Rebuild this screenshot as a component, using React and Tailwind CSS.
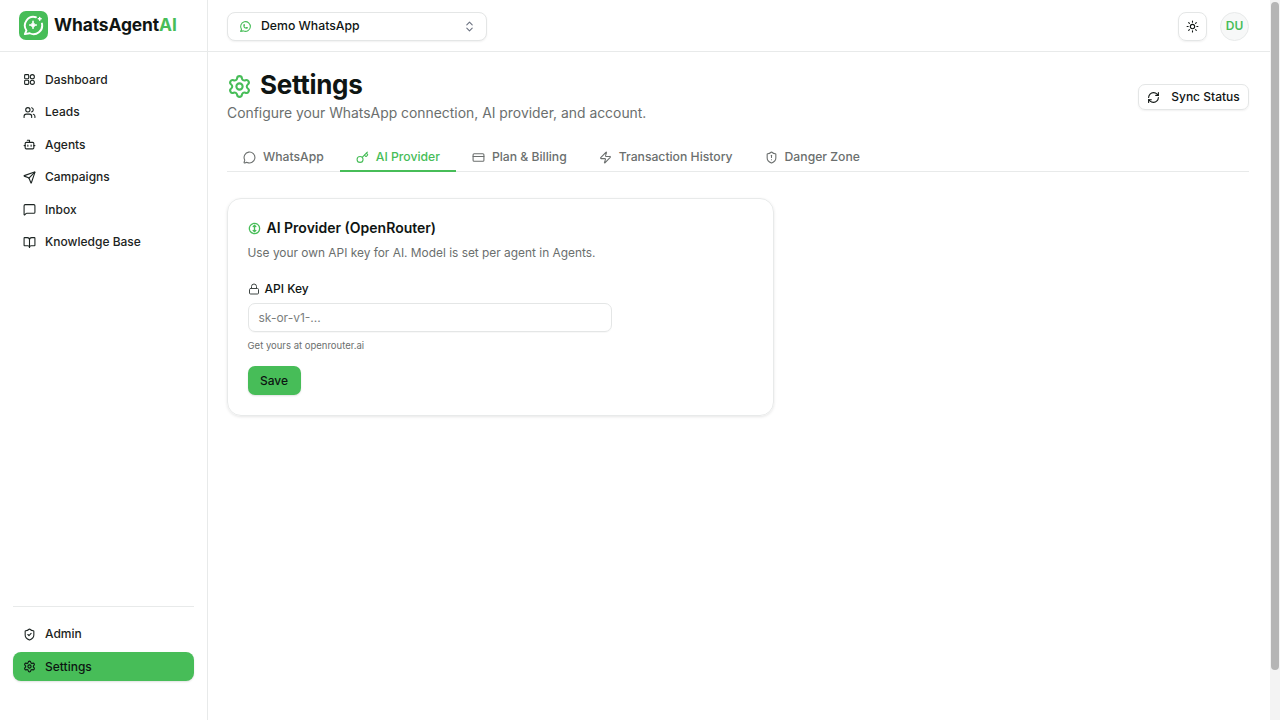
import React from 'react';
import { Users, Bot, Send, MessageSquare, BookOpen, ShieldCheck, Settings, ChevronsUpDown, Sun, RefreshCw, MessageCircle, Key, CreditCard, Zap, ShieldAlert, Lock } from 'lucide-react';

const DashIcon = ({ className }) => (
  <svg viewBox="0 0 24 24" fill="none" stroke="currentColor" strokeWidth="2" className={className}>
    <rect x="3" y="3" width="7.5" height="7.5" rx="1.5" />
    <circle cx="17.2" cy="6.8" r="3.8" />
    <rect x="3" y="13.5" width="7.5" height="7.5" rx="1.5" />
    <circle cx="17.2" cy="17.2" r="3.8" />
  </svg>
);

const WhatsIcon = ({ className }) => (
  <svg viewBox="0 0 24 24" fill="none" stroke="currentColor" strokeWidth="2" strokeLinecap="round" strokeLinejoin="round" className={className}>
    <path d="M3 21l1.65-3.8a9 9 0 1 1 3.4 2.9L3 21" />
    <path d="M9 10a.5.5 0 0 0 1 0V9a.5.5 0 0 0-1 0v1a5 5 0 0 0 5 5h1a.5.5 0 0 0 0-1h-1a.5.5 0 0 0 0 1" />
  </svg>
);

const nav = [
  { label: 'Dashboard', icon: DashIcon },
  { label: 'Leads', icon: Users },
  { label: 'Agents', icon: Bot },
  { label: 'Campaigns', icon: Send },
  { label: 'Inbox', icon: MessageSquare },
  { label: 'Knowledge Base', icon: BookOpen },
];

const tabs = [
  { label: 'WhatsApp', icon: MessageCircle },
  { label: 'AI Provider', icon: Key, active: true },
  { label: 'Plan & Billing', icon: CreditCard },
  { label: 'Transaction History', icon: Zap },
  { label: 'Danger Zone', icon: ShieldAlert },
];

const NavItem = ({ label, icon: Icon, active }) => (
  <div className={`flex h-[29px] items-center gap-[9px] rounded-[8px] px-[10px] text-[12px] font-medium ${active ? 'bg-[#47bd58] text-[#0d1512] shadow-[0_1px_2px_rgba(0,0,0,0.12)]' : 'text-[#1c2422]'}`}>
    <Icon className="h-[13px] w-[13px] shrink-0" />
    <span>{label}</span>
  </div>
);

export default function App() {
  return (
    <div className="flex h-[720px] overflow-hidden bg-white font-['Inter',sans-serif] text-[#0f1513]">
      <aside className="flex w-[208px] shrink-0 flex-col border-r border-[#e8eaea]">
        <div className="flex h-[52px] shrink-0 items-center gap-[6px] border-b border-[#e8eaea] px-[19px]">
          <div className="flex h-[29px] w-[29px] items-center justify-center rounded-[7px] bg-[#47bd58]">
            <svg viewBox="0 0 24 24" fill="none" className="h-[23px] w-[23px] text-white" stroke="currentColor" strokeWidth="2" strokeLinecap="round" strokeLinejoin="round">
              <path d="M14.5 3.4A9 9 0 0 0 4.65 17.2L3 21l5.050-.9A9 9 0 0 0 20.800 10" />
              <path d="M11.500 7.500c.4 2.500 1.500 3.600 4 4-2.500.4-3.600 1.500-4 4-.4-2.500-1.500-3.600-4-4 2.500-.4 3.600-1.500 4-4z" fill="currentColor" strokeWidth="1" />
              <path d="M18.500 3.500v3M17 5h3" strokeWidth="1.500" />
            </svg>
          </div>
          <span className="text-[17.4px] font-bold tracking-[-0.1px]">WhatsAgent<span className="text-[#47bd58]">AI</span></span>
        </div>
        <nav className="flex flex-col gap-[3.5px] px-[13px] pt-[13px]">
          {nav.map((n) => <NavItem key={n.label} {...n} />)}
        </nav>
        <div className="mx-[13px] mb-[39px] mt-auto flex flex-col gap-[3.5px] border-t border-[#e8eaea] pt-[13px]">
          <NavItem label="Admin" icon={ShieldCheck} />
          <NavItem label="Settings" icon={Settings} active />
        </div>
      </aside>

      <div className="flex min-w-0 flex-1 flex-col">
        <header className="flex h-[52px] shrink-0 items-center justify-between border-b border-[#e8eaea] pl-[19px] pr-[21px] pt-[1px]">
          <div className="flex h-[29px] w-[260px] items-center justify-between rounded-[8px] border border-[#e4e6e6] bg-white pl-[11px] pr-[10px] shadow-[0_1px_2px_rgba(0,0,0,0.06)]">
            <div className="flex items-center gap-[9px]">
              <WhatsIcon className="h-[13px] w-[13px] text-[#47bd58]" />
              <span className="text-[12.25px] font-medium">Demo WhatsApp</span>
            </div>
            <ChevronsUpDown className="h-[13px] w-[13px] text-[#6b7280]" />
          </div>
          <div className="flex items-center gap-[13px]">
            <div className="flex h-[29px] w-[29px] items-center justify-center rounded-[8px] border border-[#e4e6e6] shadow-[0_1px_2px_rgba(0,0,0,0.06)]">
              <Sun className="h-[13px] w-[13px]" />
            </div>
            <div className="flex h-[29px] w-[29px] items-center justify-center rounded-full border border-[#e8eaea] bg-[#f7f8f8] text-[12px] font-semibold text-[#47bd58]">DU</div>
          </div>
        </header>

        <main className="flex flex-1 flex-col pl-[19px] pr-[21px] pt-[18px]">
          <div className="flex items-center justify-between">
            <div>
              <div className="flex items-center gap-[8px]">
                <Settings className="h-[25px] w-[25px] text-[#47bd58]" />
                <h1 className="pb-[2px] text-[26px] font-bold leading-[30px] tracking-[-0.3px]">Settings</h1>
              </div>
              <p className="text-[13.9px] leading-[22px] text-[#6b6f6e]">Configure your WhatsApp connection, AI provider, and account.</p>
            </div>
            <button className="flex h-[26px] w-[111px] items-center justify-center gap-[11px] rounded-[7px] border border-[#e4e6e6] text-[12px] font-medium shadow-[0_1px_2px_rgba(0,0,0,0.06)]">
              <RefreshCw className="h-[13px] w-[13px]" />
              Sync Status
            </button>
          </div>

          <div className="mt-[18px] flex h-[30px] items-stretch border-b border-[#e8eaea]">
            {tabs.map((t) => (
              <div key={t.label} className={`-mb-px flex items-center gap-[7px] border-b-2 px-[16px] pt-[2px] text-[12.2px] font-medium ${t.active ? 'border-[#47bd58] text-[#47bd58]' : 'border-transparent text-[#6b6f6e]'}`}>
                <t.icon className="h-[13px] w-[13px]" />
                {t.label}
              </div>
            ))}
          </div>

          <section className="mt-[26px] w-[547px] rounded-[14px] border border-[#e8eaea] px-[19.5px] pb-[20px] pt-[20px] shadow-[0_1px_3px_rgba(0,0,0,0.1)]">
            <div className="flex items-center gap-[6px]">
              <svg viewBox="0 0 24 24" fill="none" stroke="#47bd58" strokeWidth="2.4" strokeLinecap="round" strokeLinejoin="round" className="h-[13px] w-[13px]">
                <circle cx="12" cy="12" r="9.5" strokeDasharray="7 1.500" />
                <path d="M12 6v12M9.500 8.500 12 6l2.500 2.500M9.500 15.500 12 18l2.500-2.500" />
              </svg>
              <h2 className="text-[14px] font-semibold leading-[18px]">AI Provider (OpenRouter)</h2>
            </div>
            <p className="mt-[7px] text-[11.9px] leading-[18px] text-[#6b6f6e]">Use your own API key for AI. Model is set per agent in Agents.</p>
            <div className="mt-[18px] flex items-center gap-[5px]">
              <Lock className="h-[12px] w-[12px] text-[#3f4644]" />
              <span className="text-[12px] font-medium leading-[18px]">API Key</span>
            </div>
            <div className="mt-[5px] flex h-[29px] w-[364px] items-center rounded-[7px] border border-[#e4e6e6] px-[10px] text-[12px] text-[#7a7e7d] shadow-[0_1px_1px_rgba(0,0,0,0.03)]">sk-or-v1-...</div>
            <p className="mt-[8px] text-[9.5px] leading-[12px] text-[#6b6f6e]">Get yours at openrouter.ai</p>
            <button className="mt-[14px] block h-[29px] w-[53px] rounded-[7px] bg-[#47bd58] text-[12px] font-medium text-[#0d1512] shadow-[0_1px_2px_rgba(0,0,0,0.12)]">Save</button>
          </section>
        </main>
      </div>

      <div className="flex w-[10px] shrink-0 flex-col bg-[#f3f3f3] px-[1px]">
        <div className="mt-[2px] h-[668px] w-full rounded-full bg-[#b5b5b5]" />
      </div>
    </div>
  );
}
